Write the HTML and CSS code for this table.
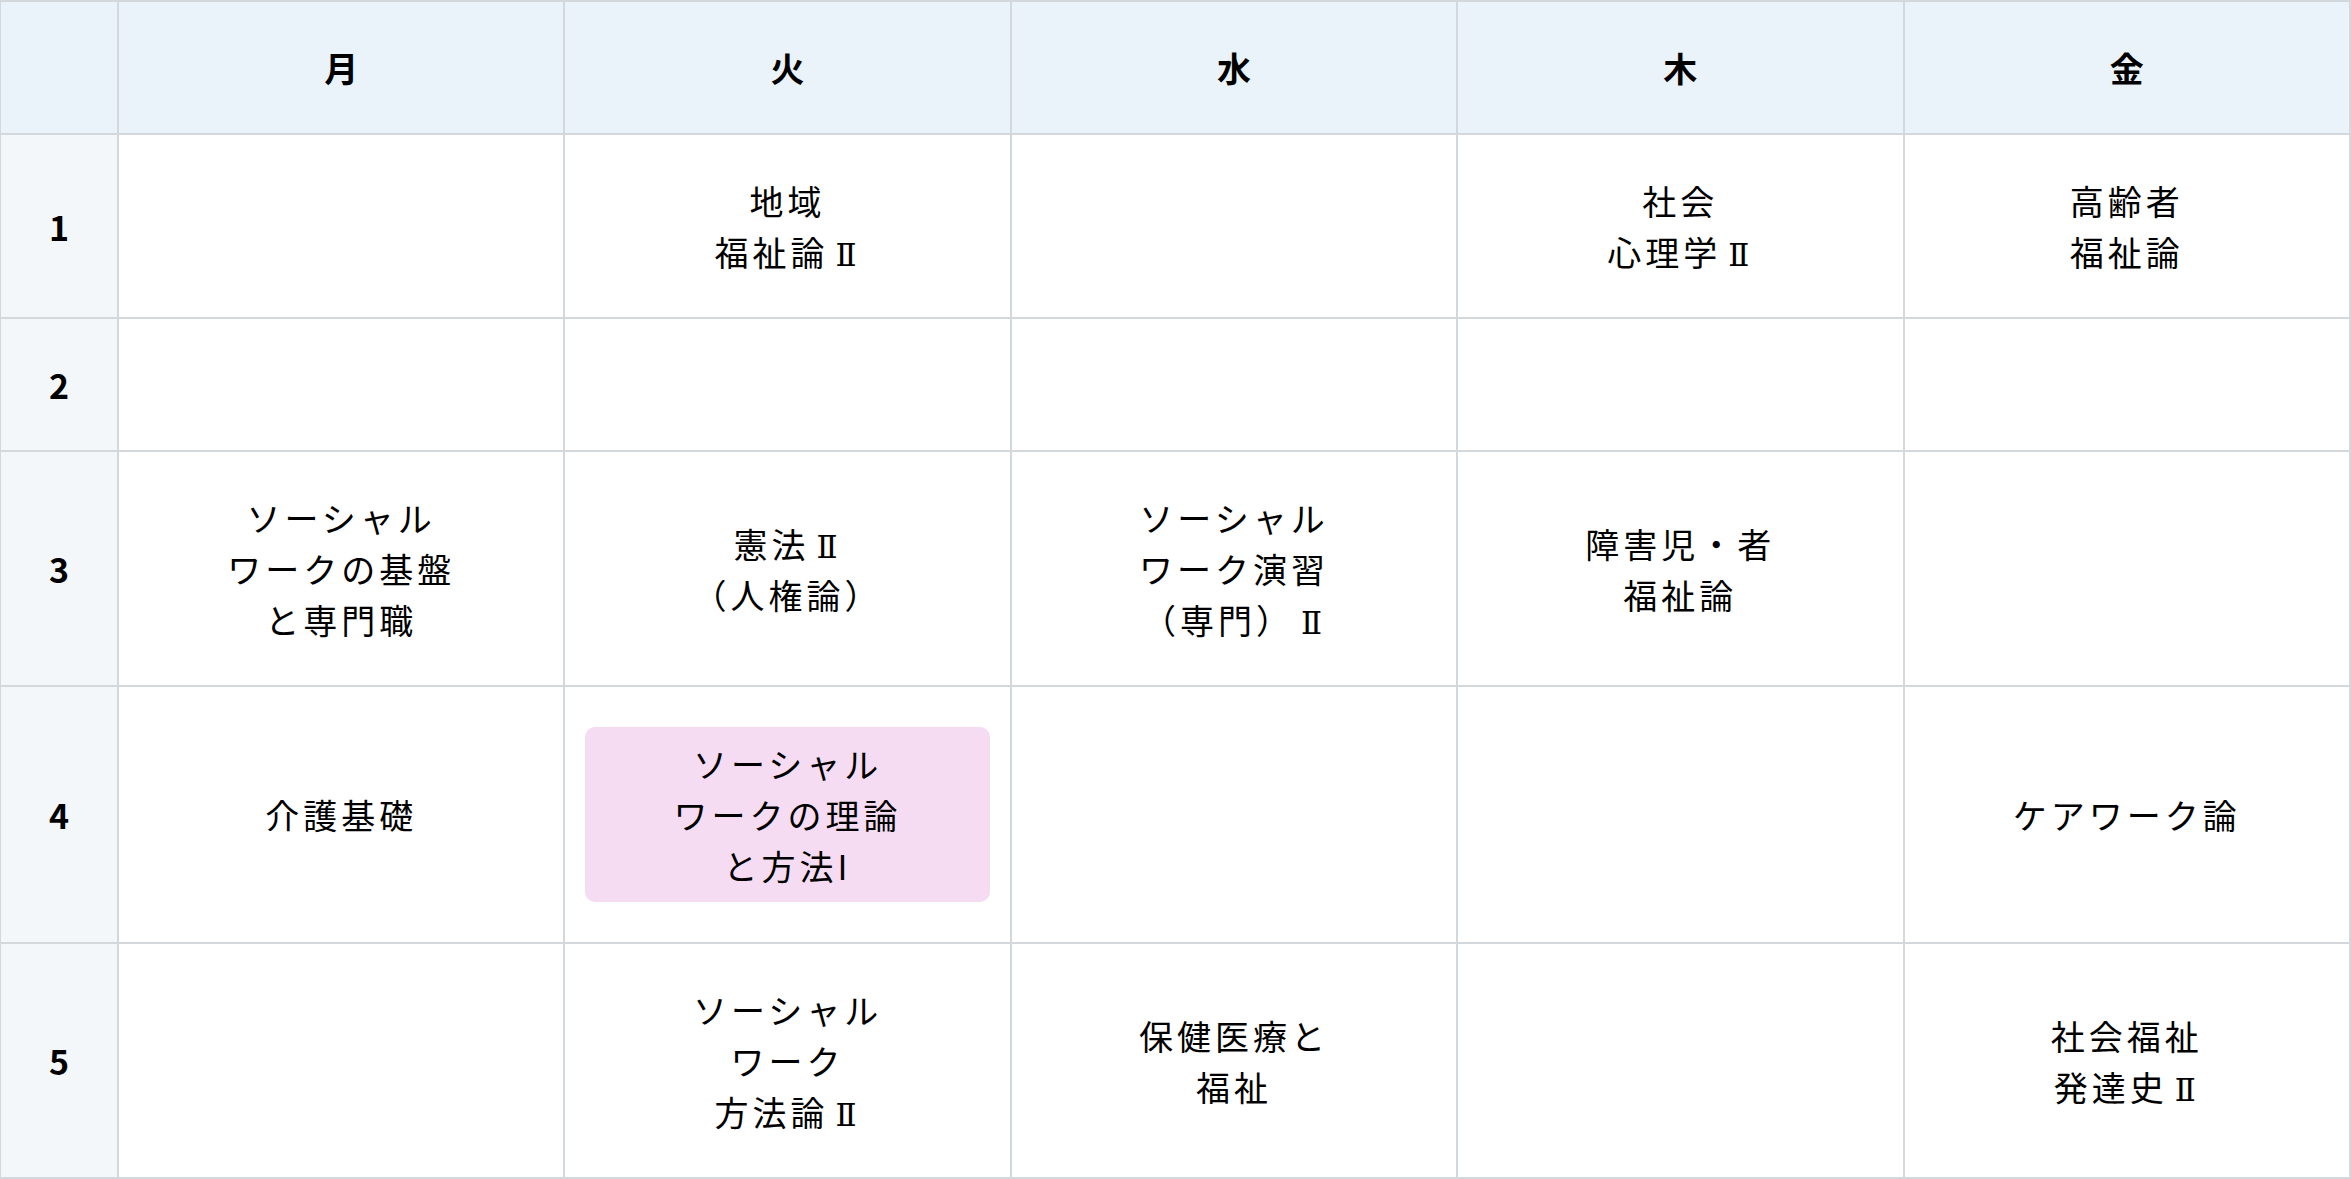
FILE: index.html
```html
<!DOCTYPE html>
<html lang="ja">
<head>
<meta charset="utf-8">
<title>時間割</title>
<link rel="stylesheet" href="styles.css">
</head>
<body>
<table class="timetable">
  <colgroup>
    <col class="col-period">
    <col><col><col><col><col>
  </colgroup>
  <thead>
    <tr>
      <th class="corner"></th>
      <th>月</th>
      <th>火</th>
      <th>水</th>
      <th>木</th>
      <th>金</th>
    </tr>
  </thead>
  <tbody>
    <tr>
      <th class="period">1</th>
      <td></td>
      <td>地域<br>福祉論<span class="roman">Ⅱ</span></td>
      <td></td>
      <td>社会<br>心理学<span class="roman">Ⅱ</span></td>
      <td>高齢者<br>福祉論</td>
    </tr>
    <tr>
      <th class="period">2</th>
      <td></td>
      <td></td>
      <td></td>
      <td></td>
      <td></td>
    </tr>
    <tr>
      <th class="period">3</th>
      <td>ソーシャル<br>ワークの基盤<br>と専門職</td>
      <td>憲法<span class="roman">Ⅱ</span><br>（人権論）</td>
      <td>ソーシャル<br>ワーク演習<br>（専門）<span class="roman">Ⅱ</span></td>
      <td>障害児・者<br>福祉論</td>
      <td></td>
    </tr>
    <tr>
      <th class="period">4</th>
      <td>介護基礎</td>
      <td><div class="highlight">ソーシャル<br>ワークの理論<br>と方法I</div></td>
      <td></td>
      <td></td>
      <td>ケアワーク論</td>
    </tr>
    <tr>
      <th class="period">5</th>
      <td></td>
      <td>ソーシャル<br>ワーク<br>方法論<span class="roman">Ⅱ</span></td>
      <td>保健医療と<br>福祉</td>
      <td></td>
      <td>社会福祉<br>発達史<span class="roman">Ⅱ</span></td>
    </tr>
  </tbody>
</table>
</body>
</html>
```

FILE: styles.css
```css
html, body {
  margin: 0;
  padding: 0;
  background: #ffffff;
}

body {
  font-family: "Noto Sans CJK JP", "Noto Sans", sans-serif;
  color: #000000;
}

.timetable {
  width: 2351px;
  table-layout: fixed;
  border-collapse: separate;
  border-spacing: 0;
  border-top: 2px solid #d3d8dc;
  border-left: 1px solid #d3d8dc;
}

.col-period {
  width: 118px;
}

.timetable th,
.timetable td {
  border-right: 2px solid #d3d8dc;
  border-bottom: 2px solid #d3d8dc;
  padding: 40px 20px;
  text-align: center;
  vertical-align: middle;
  font-size: 34px;
  line-height: 51px;
  letter-spacing: 4px;
  font-weight: 400;
}

.timetable thead th {
  background: #eaf3f9;
  font-weight: 700;
  letter-spacing: 0;
}

.timetable th.period {
  background: #f3f7fa;
  font-weight: 700;
  letter-spacing: 0;
  padding-left: 0;
  padding-right: 0;
}

.roman {
  font-family: "DejaVu Serif", "Liberation Serif", serif;
  font-size: 31px;
  line-height: 1;
  margin-left: 7px;
}

.highlight {
  background: #f5dcf2;
  border-radius: 10px;
  padding: 11px 0;
}
```
